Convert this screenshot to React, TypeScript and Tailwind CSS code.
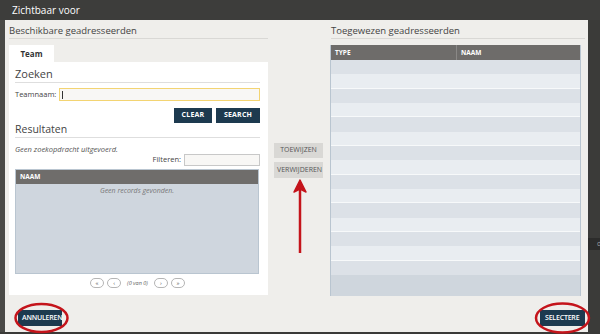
import React from "react";

const font = { fontFamily: '"Open Sans", "Noto Sans", sans-serif' };

function PageBtn({ label }: { label: string }) {
  return (
    <div className="flex h-[10px] w-[14px] items-center justify-center rounded-full border border-[#b5b5b5] bg-white text-[6px] leading-none text-[#555]">
      {label}
    </div>
  );
}

function NavyBtn({ label, w }: { label: string; w: string }) {
  return (
    <div
      className={`flex h-[15px] ${w} items-center justify-center bg-[#1d3a4f] text-[7px] font-bold tracking-[0.2px] text-white`}
    >
      {label}
    </div>
  );
}

const rows = Array.from({ length: 15 }, (_, i) => i);

export default function App() {
  return (
    <div
      style={font}
      className="relative flex h-[334px] w-[600px] flex-col overflow-hidden bg-[#3a3a38]"
    >
      {/* title bar */}
      <div className="flex h-[20px] items-center bg-[#3d3d3b] pl-[12px] text-[10px] font-medium text-white">
        Zichtbaar voor
      </div>

      <div className="flex h-[312px]">
        <div className="w-[5px] bg-[#4a4a47]" />

        {/* dialog body */}
        <div className="flex w-[583px] flex-col bg-[#efeeeb]">
          <div className="flex">
            {/* left column */}
            <div className="ml-[4px] flex w-[259px] flex-col pt-[4px]">
              <div className="h-[15px] border-b border-[#d9d8d5] text-[9.5px] leading-[14px] text-[#444]">
                Beschikbare geadresseerden
              </div>
              <div className="mt-[6px] flex h-[17px] w-[45px] items-center justify-center bg-white text-[8px] font-bold text-[#333]">
                Team
              </div>
              <div className="flex h-[233px] flex-col bg-white pl-[6px] pr-[8px]">
                <div className="mt-[4px] h-[17px] border-b border-[#dedede] text-[11px] leading-[16px] text-[#444]">
                  Zoeken
                </div>
                <div className="mt-[5px] flex h-[13px] items-center">
                  <span className="w-[44px] text-[7.5px] text-[#444]">Teamnaam:</span>
                  <div className="flex h-[13px] flex-1 items-center border border-[#f3d472] bg-[#f8f7f5] pl-[2px]">
                    <div className="h-[8px] w-px bg-[#333]" />
                  </div>
                </div>
                <div className="mt-[7px] flex h-[15px] justify-end gap-[4px]">
                  <NavyBtn label="CLEAR" w="w-[38px]" />
                  <NavyBtn label="SEARCH" w="w-[44px]" />
                </div>
                <div className="h-[15px] border-b border-[#dedede] text-[10.5px] leading-[13px] text-[#444]">
                  Resultaten
                </div>
                <div className="mt-[6px] h-[10px] text-[7.5px] italic leading-[10px] text-[#555]">
                  Geen zoekopdracht uitgevoerd.
                </div>
                <div className="flex h-[12px] items-center justify-end">
                  <span className="mr-[3px] text-[7.5px] text-[#444]">Filteren:</span>
                  <div className="h-[12px] w-[76px] border border-[#c8c8c8] bg-[#f8f7f5]" />
                </div>
                <div className="mt-[3px] flex h-[105px] w-[244px] flex-col border border-[#b9c5d0] bg-[#cfd6de]">
                  <div className="flex h-[14px] items-center bg-[#6f6d6b] pl-[4px] text-[6.5px] font-bold text-white">
                    NAAM
                  </div>
                  <div className="pt-[2px] text-center text-[7px] italic text-[#777]">
                    Geen records gevonden.
                  </div>
                </div>
                <div className="mt-[4px] flex h-[10px] items-center justify-center gap-[3px]">
                  <PageBtn label="«" />
                  <PageBtn label="‹" />
                  <span className="mx-[3px] text-[5.5px] italic text-[#666]">(0 van 0)</span>
                  <PageBtn label="›" />
                  <PageBtn label="»" />
                </div>
              </div>
            </div>

            {/* middle column */}
            <div className="flex w-[63px] flex-col pl-[6px] pt-[123px]">
              <div className="flex h-[15px] w-[49px] items-center justify-center bg-[#d9d8d5] text-[7px] text-[#555]">
                TOEWIJZEN
              </div>
              <div className="mt-[4px] flex h-[16px] w-[49px] items-center whitespace-nowrap bg-[#d9d8d5] pl-[3px] text-[7px] text-[#555]">
                VERWIJDEREN
              </div>
            </div>

            {/* right column */}
            <div className="flex w-[254px] flex-col pt-[4px]">
              <div className="h-[15px] border-b border-[#d9d8d5] text-[9.5px] leading-[14px] text-[#444]">
                Toegewezen geadresseerden
              </div>
              <div className="-ml-[1px] mt-[6px] flex h-[251px] w-[251px] flex-col border-x border-[#b9c5d0] bg-[#cfd6dd]">
                <div className="flex h-[15px] bg-[#6e6c6a] text-[6.5px] font-bold text-white">
                  <div className="flex w-[126px] items-center border-r border-[#8a8886] pl-[4px]">TYPE</div>
                  <div className="flex items-center pl-[4px]">NAAM</div>
                </div>
                {rows.map((i) => (
                  <div
                    key={i}
                    className={
                      i % 2 === 0
                        ? "h-[14.33px] bg-[#dce1e7]"
                        : "h-[14.33px] border-b border-[#f7f9fa] bg-[#e9edf1]"
                    }
                  />
                ))}
              </div>
            </div>
          </div>

          {/* footer */}
          <div className="mt-[14px] flex h-[16px] items-center justify-between pl-[13px] pr-[3px]">
            <div className="flex h-[16px] w-[44px] items-center whitespace-nowrap bg-[#1d3a4f] pl-[4px] text-[7px] font-semibold tracking-[-0.2px] text-white">
              ANNULEREN
            </div>
            <div className="flex h-[16px] w-[45px] items-center whitespace-nowrap bg-[#1d3a4f] pl-[5px] text-[7px] font-semibold tracking-[-0.2px] text-white">
              SELECTERE
            </div>
          </div>
        </div>

        <div className="flex w-[12px] flex-col bg-[#3b3b39]">
          <div className="mt-[218px] h-[12px] bg-[#2c2c2b] pl-[9px] text-[7px] leading-[12px] text-[#999]">d</div>
        </div>
      </div>

      <div className="h-[2px] bg-[#3a3a38]" />

      {/* annotations */}
      <svg className="pointer-events-none absolute left-0 top-0" width="600" height="334">
        <line x1="300" y1="253" x2="300" y2="188" stroke="#c4141b" strokeWidth="2.5" />
        <path d="M300 180 L294 192 L300 189 L306 192 Z" fill="#c4141b" stroke="#c4141b" strokeWidth="1.5" strokeLinejoin="round" />
        <ellipse cx="41.5" cy="318" rx="26" ry="14" fill="none" stroke="#c4141b" strokeWidth="2.5" />
        <ellipse cx="562.5" cy="318" rx="26.5" ry="14.5" fill="none" stroke="#c4141b" strokeWidth="2.5" />
      </svg>
    </div>
  );
}
